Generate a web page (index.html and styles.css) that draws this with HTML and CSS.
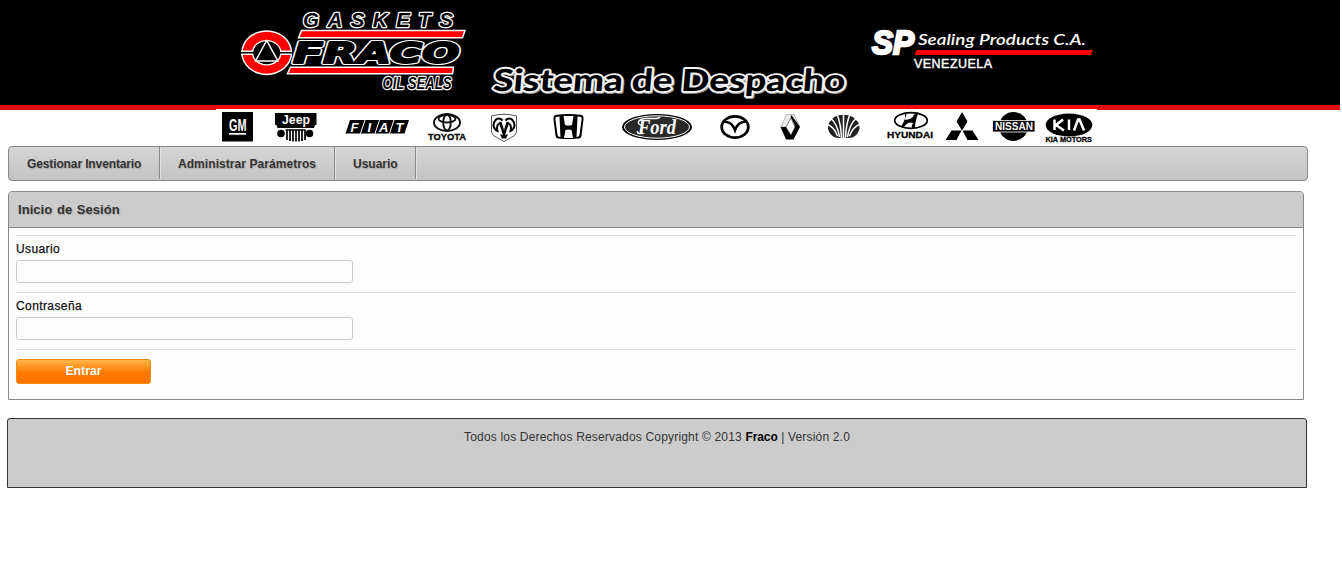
FILE: index.html
```html
<!DOCTYPE html>
<html lang="es">
<head>
<meta charset="utf-8">
<title>Sistema de Despacho</title>
<link rel="stylesheet" href="styles.css">
</head>
<body>
<header class="header">
<svg class="banner" viewBox="216 0 881 146" width="881" height="146">
  <rect x="216" y="105" width="881" height="4" fill="#f00"/>
  <rect x="216" y="109" width="881" height="37" fill="#fff"/>
  <!-- Fraco emblem -->
  <ellipse cx="266.7" cy="52.7" rx="25.5" ry="22.5" fill="#fff"/>
  <ellipse cx="266.7" cy="52.7" rx="24" ry="21" fill="#f00"/>
  <ellipse cx="266.7" cy="52.7" rx="14.8" ry="12.8" fill="#fff"/>
  <path d="M241 50.5h51v4.400h-51z" fill="#fff"/>
  <path d="M240 52h53v1.500h-53z" fill="#000"/>
  <ellipse cx="266.700" cy="52.700" rx="13.500" ry="11.500" fill="#000"/>
  <path d="M266.700 40.500L255.500 61h22.400z" fill="#000" stroke="#fff" stroke-width="1.500"/>
  <!-- Fraco wordmark -->
  <path d="M301.500 30.600H465l-2.500 7.200h-164z" fill="#f00" stroke="#fff" stroke-width="1.500"/>
  <path d="M290.500 67.300H453.500l-1 6.500h-165z" fill="#f00" stroke="#fff" stroke-width="1.500"/>
  <text class="outline" x="303" y="27" font-size="20.500" textLength="150" stroke-width="2.600">GASKETS</text>
  <text class="fraco fraco-edge" transform="translate(293 63.300) scale(1.400 1)" x="0" y="0" textLength="119" lengthAdjust="spacingAndGlyphs">FRACO</text>
  <text class="fraco fraco-face" transform="translate(293 63.300) scale(1.400 1)" x="0" y="0" textLength="119" lengthAdjust="spacingAndGlyphs">FRACO</text>
  <text class="outline" x="382.500" y="88.500" font-size="17" textLength="69" lengthAdjust="spacingAndGlyphs" stroke-width="2.600">OIL SEALS</text>
  <!-- System title -->
  <g transform="translate(0 91) skewX(-5)">
    <text class="title title-shade" x="493.500" y="1" textLength="352" lengthAdjust="spacingAndGlyphs">Sistema de Despacho</text>
    <text class="title" x="492.500" y="0" textLength="352" lengthAdjust="spacingAndGlyphs">Sistema de Despacho</text>
  </g>
  <!-- Sealing Products -->
  <text class="sp" x="872" y="53.500" textLength="42" lengthAdjust="spacingAndGlyphs">SP</text>
  <text class="sealing" x="918" y="45" textLength="168" lengthAdjust="spacingAndGlyphs">Sealing Products C.A.</text>
  <path d="M916.500 50H1093l-2 5H914.500z" fill="#f00"/>
  <text class="venezuela" x="914" y="68" textLength="78">VENEZUELA</text>
  <!-- GM -->
  <path d="M222 112h31v29.500h-31z"/>
  <text class="white" x="229" y="131" font-size="16.500" textLength="17.500" lengthAdjust="spacingAndGlyphs">GM</text>
  <path d="M229 133h17v1.700h-17z" fill="#fff"/>
  <!-- Jeep -->
  <path d="M275 113h41.500v12h-1.500l-1 3h-36.500l-1-3H275z"/>
  <text class="white" x="282" y="124" font-size="12.500" textLength="28" lengthAdjust="spacingAndGlyphs">Jeep</text>
  <circle cx="281" cy="133.500" r="3.800"/><circle cx="309.500" cy="133.500" r="3.800"/>
  <path d="M285.500 130h20" stroke="#000" stroke-width="1.500"/>
  <path d="M287 130v10M290 130v11M293 130v11.500M296 130v11.500M299 130v11.500M302 130v11M305 130v10" stroke="#000" stroke-width="1.700"/>
  <!-- Fiat -->
  <path d="M350 120h14.500l-4.500 13.500h-14.500zM365.500 120h13.500l-4.500 13.500H361zM380 120h13.500l-4.500 13.500h-13.500zM394.500 120h14.500l-4.500 13.500H390z"/>
  <g class="white" font-size="13" font-style="italic"><text x="350.500" y="131.500">F</text><text x="367.500" y="131.500">I</text><text x="379" y="131.500">A</text><text x="395.500" y="131.500">T</text></g>
  <!-- Toyota -->
  <g fill="none" stroke="#111" stroke-width="1.900">
    <ellipse cx="447" cy="122.500" rx="13" ry="8.500"/>
    <ellipse cx="447" cy="118.800" rx="8.500" ry="3.700"/>
    <ellipse cx="447" cy="122.500" rx="3.800" ry="8"/>
  </g>
  <text class="brand" x="428" y="140" font-size="9.500" textLength="38" lengthAdjust="spacingAndGlyphs">TOYOTA</text>
  <!-- Dodge -->
  <path d="M491.500 116Q504 112.500 516.500 116V132q-1 4-7 6.500l-5.500 3-5.500-3q-6-2.500-7-6.500z" fill="#fff" stroke="#555"/>
  <path d="M502.500 120.500q-3-3.500-6.500-1-3.500 4-2 8 1.500 3 3.500 3.500-1.500-5 1.500-7.500M505.500 120.500q3-3.500 6.500-1 3.500 4 2 8-1.500 3-3.500 3.500 1.500-5-1.500-7.500" fill="none" stroke="#000" stroke-width="2"/>
  <path d="M500 122l4 12 4-12" fill="none" stroke="#000" stroke-width="2.600"/>
  <path d="M500 134l2 4.500h4l2-4.500-4 1.500z"/>
  <!-- Honda -->
  <path d="M555 115q13.500-2 27 0 2 1 1.500 4l-2 17q-.500 2.500-3 2.500-10 1-20 0-2.500 0-3-2.500l-2-17q-.500-3 1.500-4z"/>
  <path d="M556 117q-1 1-.500 3l2 15q.500 2 3 2l-1-20.500zM581 117q1 1 .500 3l-2 15q-.500 2-3 2l1-20.500zM563.500 116h10l-1.500 9q-3.500 1-7 0zM565.500 130q3-1 6 0l1.500 8h-9z" fill="#fff"/>
  <!-- Ford -->
  <ellipse cx="657" cy="127" rx="35" ry="13"/>
  <ellipse cx="657" cy="127" rx="32.500" ry="11.200" fill="#292929" stroke="#fff"/>
  <text class="ford" x="638" y="133.500" textLength="38" lengthAdjust="spacingAndGlyphs">Ford</text>
  <path d="M641 125q-4-1-2-4 2-2.500 7-2.500h8q5 0 6-1.500M637 131q1 4 6 2" fill="none" stroke="#fff" stroke-width="1.400"/>
  <!-- Mazda -->
  <ellipse cx="735" cy="127" rx="13.300" ry="10.600" fill="none" stroke="#000" stroke-width="2.800"/>
  <path d="M723 121.500q7 .500 9 3.500 2 2 3 5 1-3 3-5 2-3 9-3.500" fill="none" stroke="#000" stroke-width="2.600"/>
  <!-- Renault -->
  <path d="M786.500 114.500h7.500L800 127h-5l-4.500-9-4.500 9h-5z" fill="#eee" stroke="#999" stroke-width=".7"/>
  <path d="M780.500 127h5.500l8 12.500h-8zM800 127l-6.500 12.500h-3.500l-2-3.500 6.500-11-4-8 1-2z"/>
  <path d="M786 127l5-9 4 9-4 8z" fill="#fff" stroke="#444" stroke-width=".6"/>
  <!-- Daewoo -->
  <path d="M834 117q9.500-4.500 19 0l5 5q2 3 1.500 6.500-1 6-7 9-9 1-17.500 0-6-3-7-9-.500-3.500 1.500-6.500z" fill="#222"/>
  <path d="M843.500 138V114M841.500 138q-.500-14-4.500-24M845.500 138q.500-14 4.500-24M839.500 137q-2-13-9-19M847.500 137q2-13 9-19M837.500 136q-3-9-11-12M849.500 136q3-9 11-12" fill="none" stroke="#fff" stroke-width="1.500"/>
  <!-- Hyundai -->
  <ellipse cx="911" cy="120.500" rx="16.300" ry="7.800" fill="none" stroke="#000" stroke-width="1.700"/>
  <path d="M905 113.500q2 0 1 3-1 2-2 3 8 1 10-5l4-1q-3 9-3 14l-3 .500q-1-2 1-5-5-2-9 4l-3-.500q5-7 4-13z"/>
  <text class="brand" x="887" y="138" font-size="9.500" textLength="46" lengthAdjust="spacingAndGlyphs">HYUNDAI</text>
  <!-- Mitsubishi -->
  <path d="M962 112l5.500 9.500-5.500 9-5.500-9zM951.500 130.500h10l-5 9.500h-11zM962.500 130.500h10l6 9.500h-11z"/>
  <!-- Nissan -->
  <circle cx="1013.500" cy="126.500" r="14.500"/>
  <path d="M992.500 120.500h42.500v11.500h-42.500z" stroke="#fff" stroke-width=".8"/>
  <text class="white" x="995" y="130.300" font-size="10.500" textLength="38" lengthAdjust="spacingAndGlyphs">NISSAN</text>
  <!-- Kia -->
  <ellipse cx="1069" cy="125" rx="23.300" ry="11.500"/>
  <path d="M1054.500 119.500v10.500M1063 119.500l-7 5.500 8 5.500M1069 119.500v10.500M1074 130.500l4-11h1.500l4.500 11" fill="none" stroke="#fff" stroke-width="2.500"/>
  <text class="brand" x="1045.500" y="142" font-size="8" textLength="46.500" lengthAdjust="spacingAndGlyphs">KIA MOTORS</text>
</svg>
</header>
<nav class="menu">
  <a class="item inventory">Gestionar Inventario</a>
  <a class="item params">Administrar Parámetros</a>
  <a class="item user">Usuario</a>
</nav>
<main class="panel">
  <h1 class="panel-title">Inicio de Sesión</h1>
  <form class="form">
    <div class="field"><label class="label" for="u">Usuario</label><input class="input" id="u" type="text"></div>
    <div class="field"><label class="label" for="p">Contraseña</label><input class="input" id="p" type="password"></div>
    <div class="actions"><button class="submit" type="button">Entrar</button></div>
  </form>
</main>
<footer class="footer">Todos los Derechos Reservados Copyright © 2013 <b class="company">Fraco</b> | Versión 2.0</footer>
</body>
</html>
```
FILE: styles.css
```css
* { box-sizing: border-box; }
body {
  margin: 0;
  background: #fff;
  font: 12px "Liberation Sans", Arial, sans-serif;
  color: #222;
}
.header {
  width: 1340px;
  height: 146px;
  padding-left: 216px;
  background: linear-gradient(#000 105px, #e00b0f 105px, #e00b0f 110px, #fff 110px);
}
.banner { display: block; font-family: "Liberation Sans", Arial, sans-serif; }
.outline {
  font-weight: bold;
  font-style: italic;
  fill: #000;
  stroke: #fff;
  paint-order: stroke;
  stroke-linejoin: round;
}
.fraco { font: italic bold 29px "DejaVu Sans", sans-serif; stroke-linejoin: round; }
.fraco-edge { fill: #fff; stroke: #fff; stroke-width: 4px; }
.fraco-face { fill: #000; stroke: #000; stroke-width: 1.8px; }
.title {
  font: 900 30.5px Lato, sans-serif;
  fill: #000;
  stroke: #f4f4f4;
  stroke-width: 3.6px;
  paint-order: stroke;
  stroke-linejoin: round;
}
.title-shade { stroke: #999; }
.sp {
  font: italic bold 34px "Liberation Sans", sans-serif;
  fill: #fff;
  stroke: #fff;
  stroke-width: 2.4px;
}
.sealing { font: italic 600 16px Lato, sans-serif; fill: #fff; }
.venezuela { font-size: 12.5px; fill: #fff; stroke: #fff; stroke-width: .4px; }
.white { fill: #fff; font-weight: bold; }
.brand { fill: #000; font-weight: bold; stroke: #000; stroke-width: .3px; }
.ford { font: italic bold 21px "Liberation Serif", serif; fill: #fff; }
.menu {
  display: flex;
  width: 1300px;
  height: 35px;
  margin-left: 8px;
  border: 1px solid #888;
  border-radius: 4px;
  background: linear-gradient(#d5d5d5, #c4c4c4);
}
.item {
  border-right: 1px solid #888;
  box-shadow: 1px 0 #e2e2e2;
  margin-bottom: 1px;
  padding-left: 18px;
  line-height: 34px;
  font-weight: bold;
  color: #333;
  text-shadow: 1px 1px 1px #aaa;
  white-space: nowrap;
}
.inventory { width: 151px; letter-spacing: -.12px; }
.params { width: 175px; letter-spacing: .06px; }
.user { width: 81px; }
.panel {
  width: 1296px;
  height: 209px;
  margin: 10px 0 0 8px;
  border: 1px solid #888;
  border-radius: 4px 4px 0 0;
  background: #fdfdfd;
}
.panel-title {
  height: 36px;
  margin: 0;
  padding-left: 9px;
  border-bottom: 1px solid #888;
  border-radius: 3px 3px 0 0;
  background: #ccc;
  color: #333;
  font: bold 13px/35px "Liberation Sans", Arial, sans-serif;
  letter-spacing: .05px;
  word-spacing: 1px;
  text-shadow: 1px 1px 1px #aaa;
}
.form { padding: 7px 7px 0; }
.field { height: 57px; border-top: 1px solid #ddd; padding-top: 5px; }
.label {
  display: block;
  height: 19px;
  line-height: 16px;
  letter-spacing: .4px;
  color: #111;
  -webkit-text-stroke: .25px #111;
}
.input {
  display: block;
  width: 337px;
  height: 23px;
  padding: 2px 4px;
  border: 1px solid #ccc;
  border-radius: 3px;
  background: #fdfdfd;
}
.actions { border-top: 1px solid #ddd; padding-top: 9px; }
.submit {
  display: block;
  width: 135px;
  height: 25px;
  padding: 0 0 2px;
  border: 1px solid #f08a10;
  border-radius: 3px;
  background: linear-gradient(#ffb748, #ff7800 55%, #ff7400);
  color: #fff;
  font: bold 12px "Liberation Sans", Arial, sans-serif;
  letter-spacing: .1px;
}
.footer {
  width: 1300px;
  height: 70px;
  margin: 18px 0 0 7px;
  padding-top: 10px;
  border: 1px solid #333;
  border-radius: 3px 3px 0 0;
  background: #ccc;
  color: #333;
  line-height: 16px;
  letter-spacing: .18px;
  text-align: center;
}
.company { color: #000; letter-spacing: -.1px; }
```
